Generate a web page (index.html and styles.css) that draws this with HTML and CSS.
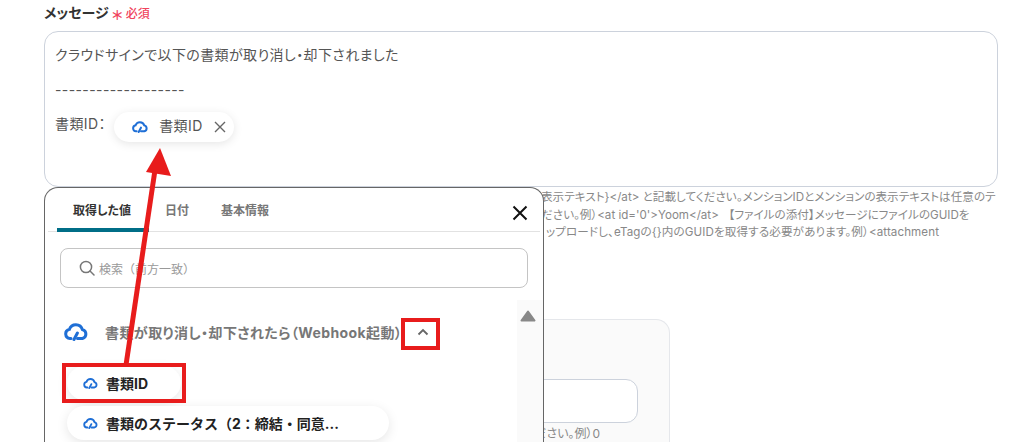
FILE: index.html
```html
<!DOCTYPE html>
<html lang="ja">
    <head>
        <meta charset="UTF-8">
        <meta name="viewport" content="width=device-width, initial-scale=1.0">
        <title>メッセージ</title>
        <link rel="stylesheet" href="styles.css">
    </head>
    <body>
        <svg width="0" height="0" class="defs">
            <symbol id="cloud" viewBox="0 0 24 18">
                <path d="M7 15.5H6A4.6 4.6 0 0 1 5.4 6.4 6.8 6.8 0 0 1 18.4 6.6 4.6 4.6 0 0 1 18.5 15.5H13.5" fill="none" stroke="#1f6fd6" stroke-width="3" stroke-linecap="round"/>
                <path d="M10 16.5L13.4 10" fill="none" stroke="#1f6fd6" stroke-width="3" stroke-linecap="round"/>
            </symbol>
        </svg>

        <div class="page">
            <div class="field">
                <div class="label">メッセージ <span class="star">＊</span><span class="required">必須</span></div>
                <div class="message">
                    <div class="line">クラウドサインで以下の書類が取り消し・却下されました</div>
                    <div class="line">-------------------</div>
                    <div class="line">書類ID：
                        <span class="chip">
                            <svg class="chip-cloud"><use href="#cloud"/></svg>
                            <span>書類ID</span>
                            <svg class="chip-x" viewBox="0 0 12 12"><path d="M1 1L11 11M11 1L1 11" stroke="#666" stroke-width="1.4" fill="none"/></svg>
                        </span>
                    </div>
                </div>
                <div class="help">
                    <div>表示テキスト}&lt;/at&gt; と記載してください。メンションIDとメンションの表示テキストは任意のテ</div>
                    <div>ださい。例）&lt;at id='0'&gt;Yoom&lt;/at&gt; &nbsp; 【ファイルの添付】メッセージにファイルのGUIDを</div>
                    <div class="help-last">ップロードし、eTagの{}内のGUIDを取得する必要があります。例）&lt;attachment</div>
                </div>
            </div>

            <div class="subcard">
                <div class="subinput"></div>
                <div class="subhelp">ださい。例）0</div>
            </div>
        </div>

        <div class="popover">
            <div class="tabs">
                <div class="tab active">取得した値</div>
                <div class="tab">日付</div>
                <div class="tab">基本情報</div>
                <svg class="close" viewBox="0 0 16 16"><path d="M1.5 1.5L14.5 14.5M14.5 1.5L1.5 14.5" stroke="#111" stroke-width="2" fill="none"/></svg>
            </div>
            <div class="search">
                <svg class="search-icon" viewBox="0 0 16 16"><circle cx="7" cy="7" r="5.6" fill="none" stroke="#777" stroke-width="1.5"/><path d="M11 11L15 15" stroke="#777" stroke-width="1.5" stroke-linecap="round"/></svg>
                <span>検索（前方一致）</span>
            </div>
            <div class="list">
                <div class="list-body">
                    <div class="section">
                        <svg class="section-cloud"><use href="#cloud"/></svg>
                        <span class="section-title">書類が取り消し・却下されたら（Webhook起動）</span>
                        <svg class="chevron" viewBox="0 0 12 8"><path d="M1.5 6.5L6 2L10.5 6.5" stroke="#666" stroke-width="1.8" fill="none"/></svg>
                    </div>
                    <div class="item short">
                        <svg class="item-cloud"><use href="#cloud"/></svg>
                        <span>書類ID</span>
                    </div>
                    <div class="item">
                        <svg class="item-cloud"><use href="#cloud"/></svg>
                        <span>書類のステータス（2：締結・同意...</span>
                    </div>
                </div>
                <div class="scrollbar">
                    <svg class="scroll-up" viewBox="0 0 16 12"><path d="M8 1.5L14.5 10.5H1.5Z" fill="#888" stroke="#888" stroke-width="2" stroke-linejoin="round"/></svg>
                </div>
            </div>
        </div>

        <div class="mark mark-chevron"></div>
        <div class="mark mark-item"></div>
        <svg class="arrow" width="1029" height="442" viewBox="0 0 1029 442">
            <path d="M126 365L155 170" stroke="#e81c1c" stroke-width="5" fill="none"/>
            <path d="M160 148L171 176L146 172Z" fill="#e81c1c"/>
        </svg>
    </body>
</html>
```

FILE: styles.css
```css
* {
    box-sizing: border-box;
}
html, body {
    margin: 0;
    height: 442px;
    overflow: hidden;
    background-color: white;
}
body {
    position: relative;
    font-family: "Inter", "Noto Sans CJK JP", sans-serif;
    font-feature-settings: "palt";
    color: #555;
}
.defs {
    position: absolute;
}
.page {
    height: 442px;
    padding: 3px 31px 0 44px;
}
.label {
    font-size: 14px;
    font-weight: 700;
    line-height: 20px;
    height: 20px;
    color: #333;
    margin-bottom: 8px;
}
.star {
    color: #f0435c;
    font-size: 13px;
    font-weight: 700;
    vertical-align: -2px;
    margin-right: 3px;
}
.required {
    color: #f0435c;
    font-size: 12px;
    font-weight: 500;
}
.message {
    height: 156px;
    padding: 6px 10px;
    border: 1px solid #ccd2dc;
    border-radius: 14px;
    font-size: 14px;
    letter-spacing: 0.4px;
}
.line {
    height: 34.5px;
    line-height: 34.5px;
    white-space: nowrap;
}
.chip {
    display: inline-flex;
    align-items: center;
    height: 30px;
    width: 120px;
    margin-top: 3px;
    margin-left: 4px;
    padding-left: 18px;
    border-radius: 15px;
    background-color: white;
    box-shadow: 0 2px 10px rgba(0, 0, 0, 0.1);
    vertical-align: middle;
}
.chip-cloud {
    width: 16px;
    height: 12px;
    margin-right: 11px;
}
.chip-x {
    width: 12px;
    height: 12px;
    margin-left: 11px;
}
.help {
    padding: 2px 0 0 497px;
    font-size: 11.6px;
    line-height: 17.5px;
    color: #888;
    white-space: nowrap;
}
.help-last {
    margin-left: 5px;
    letter-spacing: 0.1px;
}
.subcard {
    position: absolute;
    left: 300px;
    top: 319px;
    width: 370px;
    height: 123px;
    padding: 59px 31px 0 0;
    background-color: #fafafa;
    border: 1px solid #e5e7eb;
    border-bottom: none;
    border-radius: 14px 14px 0 0;
}
.subinput {
    height: 44px;
    background-color: white;
    border: 1px solid #ccd2dc;
    border-radius: 12px;
}
.subhelp {
    font-size: 12px;
    line-height: 22px;
    color: #888;
    text-align: right;
    padding-right: 38px;
}

.popover {
    position: absolute;
    left: 44px;
    top: 187px;
    width: 500px;
    height: 255px;
    background-color: white;
    border: 1px solid #666;
    border-bottom: none;
    border-radius: 14px 14px 0 0;
}
.tabs {
    display: flex;
    height: 44px;
    margin: 0 3px;
    padding-left: 9px;
    border-bottom: 1px solid #e2e2e2;
    position: relative;
}
.tab {
    padding: 14px 16px 0;
    font-size: 12px;
    font-weight: 700;
    color: #777;
    line-height: 18px;
}
.tab.active {
    color: #333;
    border-bottom: 4px solid #006e87;
    border-radius: 4px 0 0 0;
    height: 44px;
    width: 92px;
}
.close {
    position: absolute;
    right: 12px;
    top: 17px;
    width: 16px;
    height: 16px;
}
.search {
    display: flex;
    align-items: center;
    gap: 4px;
    height: 40px;
    margin: 16px 15px 0;
    padding-left: 18px;
    border: 1px solid #c4c4c4;
    border-radius: 8px;
    font-size: 12px;
    font-feature-settings: normal;
    color: #999;
}
.search-icon {
    width: 16px;
    height: 16px;
}
.list {
    display: flex;
    height: 142px;
    margin-top: 12px;
}
.list-body {
    flex: 1;
    padding-left: 22px;
}
.section {
    display: flex;
    align-items: center;
    height: 66px;
    padding-bottom: 2px;
}
.section-cloud {
    width: 24px;
    height: 18px;
    margin-left: -3px;
    margin-right: 17px;
}
.section-title {
    font-size: 14px;
    font-weight: 700;
    letter-spacing: 0.4px;
    color: #777;
    white-space: nowrap;
}
.chevron {
    width: 12px;
    height: 8px;
    margin-left: 15px;
}
.item {
    display: flex;
    align-items: center;
    width: 322px;
    height: 34px;
    margin-bottom: 6px;
    padding-left: 16px;
    border-radius: 17px;
    background-color: white;
    box-shadow: 0 3px 12px rgba(0, 0, 0, 0.1);
    font-size: 14px;
    font-weight: 700;
    font-feature-settings: normal;
    color: #222;
    white-space: nowrap;
}
.item.short {
    width: 114px;
}
.item-cloud {
    width: 15px;
    height: 11px;
    margin-right: 8px;
}
.scrollbar {
    width: 26px;
    padding: 6px 0 0 3px;
    background-color: #fafafa;
}
.scroll-up {
    width: 16px;
    height: 12px;
}

/* annotation on top of the screenshot */
.mark {
    position: absolute;
    border: 4px solid #e81c1c;
}
.mark-chevron {
    left: 401px;
    top: 318px;
    width: 39px;
    height: 32px;
}
.mark-item {
    left: 62px;
    top: 363px;
    width: 124px;
    height: 40px;
}
.arrow {
    position: absolute;
    left: 0;
    top: 0;
}
```
